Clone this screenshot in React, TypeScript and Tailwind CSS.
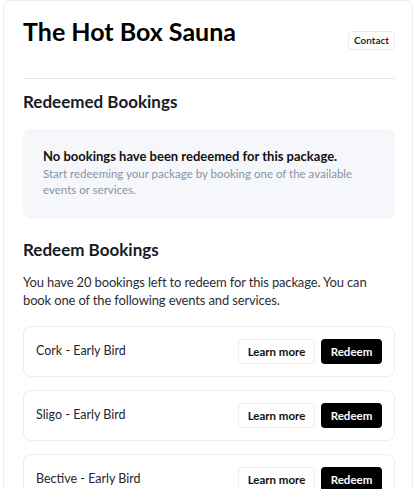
import React from 'react';

const events = ['Cork - Early Bird', 'Sligo - Early Bird', 'Bective - Early Bird'];

export default function App() {
  return (
    <div
      className="min-h-screen bg-white px-[3px] text-[#181b22]"
      style={{ fontFamily: 'Lato, "Noto Sans", sans-serif' }}
    >
      <div className="rounded-lg border border-[#eceef2] bg-white pt-[14px] pr-[17px] pb-6 pl-[19px]">
        {/* Header */}
        <div className="flex items-start justify-between">
          <h1 className="text-[25px] font-bold leading-8 text-black">The Hot Box Sauna</h1>
          <button className="mt-4 h-[19px] w-[47px] rounded border border-[#e8eaef] text-[10px] font-semibold text-[#111]">
            Contact
          </button>
        </div>
        <hr className="mt-[28px] border-[#e5e7eb]" />

        {/* Redeemed */}
        <h2 className="mt-[11px] text-[17px] font-bold leading-6">Redeemed Bookings</h2>
        <div className="mt-[15px] rounded-lg bg-[#f5f7fa] px-5 pt-[17px] pb-[21px]">
          <p className="text-[13px] font-bold leading-5 text-[#111]">
            No bookings have been redeemed for this package.
          </p>
          <p className="text-[11.5px] leading-4 text-[#8a93a5]">
            Start redeeming your package by booking one of the available events or services.
          </p>
        </div>

        {/* Redeem */}
        <h2 className="mt-[19px] text-[17px] font-bold leading-6">Redeem Bookings</h2>
        <p className="mt-[11px] text-[13px] leading-[18px] tracking-[-0.15px] text-[#2b2f36]">
          You have 20 bookings left to redeem for this package. You can book one of the following
          events and services.
        </p>
        <div className="mt-[17px] flex flex-col gap-[13px]">
          {events.map((e) => (
            <div
              key={e}
              className="flex items-center justify-between rounded-lg border border-[#eceef2] px-3 py-3"
            >
              <span className="text-[12.5px] text-[#1f2430]">{e}</span>
              <div className="flex gap-[6px]">
                <button className="h-[25px] w-[77px] rounded border border-[#eceef2] text-[11.5px] font-bold text-[#111]">
                  Learn more
                </button>
                <button className="h-[25px] w-[61px] rounded bg-black text-[11.5px] font-bold text-white">
                  Redeem
                </button>
              </div>
            </div>
          ))}
        </div>
      </div>
    </div>
  );
}
